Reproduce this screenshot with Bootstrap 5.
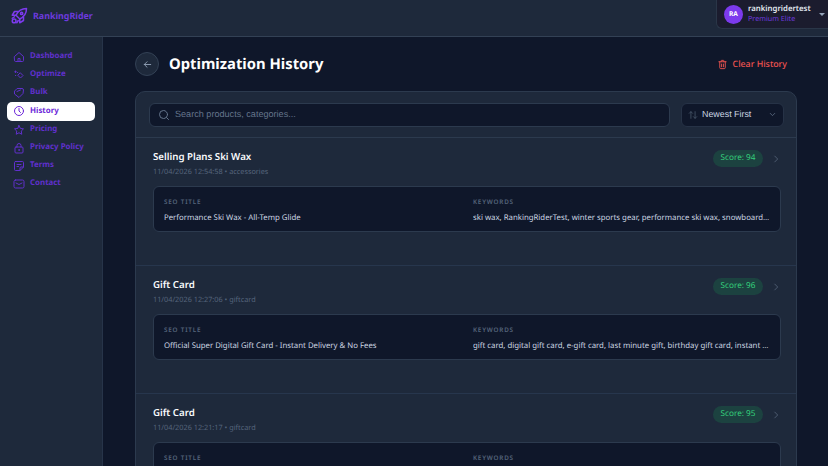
<!DOCTYPE html>
<html lang="en">
<head>
    <meta charset="UTF-8">
    <meta name="viewport" content="width=device-width, initial-scale=1.0">
    <title>Optimization History</title>
    <link href="https://cdn.jsdelivr.net/npm/bootstrap@5.3.0/dist/css/bootstrap.min.css" rel="stylesheet">
    <style>
        html, body { height: 100%; overflow: hidden; }
        body { background: #0f172a; font-family: "Noto Sans", sans-serif; color: #f1f5f9; text-rendering: geometricPrecision; }
        svg { display: block; flex-shrink: 0; fill: none; stroke: currentColor; stroke-width: 2; stroke-linecap: round; stroke-linejoin: round; }
        .topbar { height: 37px; background: #1e293b; border-bottom: 1px solid #334155; padding: 0 0 5px 10px; }
        .brand { color: #6d3ade; font-size: 8.9px; font-weight: 700; margin-left: 5px; }
        .user-box { width: 112px; height: 29px; background: #1b1c2e; border: 1px solid #2a3648; border-top: 0; border-right: 0; border-radius: 0 0 0 6px; padding-left: 7px; }
        .avatar { width: 19px; height: 19px; background: #7c3aed; font-size: 6.6px; font-weight: 700; color: #fff; }
        .user-info { margin-left: 5px; width: 66px; }
        .user-name { font-size: 7.8px; font-weight: 600; line-height: 10px; color: #e2e8f0; }
        .user-plan { font-size: 7.2px; line-height: 10px; color: #6d3ade; }
        .caret { width: 0; height: 0; border-left: 3px solid transparent; border-right: 3px solid transparent; border-top: 3px solid #94a3b8; margin-left: 5px; }
        .shell { height: 429px; }
        .sidebar { width: 103px; background: #1e293b; border-right: 1px solid #273449; padding: 11px 7px; flex-shrink: 0; }
        .side-link { height: 18.15px; padding-left: 6px; gap: 5px; color: #6030cc; font-size: 7.9px; font-weight: 700; text-decoration: none; border-radius: 5px; }
        .side-link.active { background: #fff; color: #6d28d9; }
        .main { padding: 15px 31px 0 32px; min-width: 0; }
        .back-btn { width: 24px; height: 24px; background: #1e293b; border: 1px solid #334155; color: #94a3b8; }
        .page-title { font-size: 14.8px; font-weight: 700; color: #fff; margin: 1px 0 0 10px; }
        .clear-btn { color: #ef5350; font-size: 8.8px; font-weight: 500; gap: 5px; margin: 1px 10px 0 0; }
        .history-card { margin-top: 15px; background: #1e293b; border: 1px solid #2c3a4e; border-radius: 10px 10px 0 0; }
        .filter-row { height: 46px; padding: 0 12px 0 13px; gap: 11px; border-bottom: 1px solid #2c3a4e; }
        .search-box { height: 24px; background: #0f172a; border: 1px solid #2c3a4e; border-radius: 6px; padding-left: 8px; gap: 5px; color: #64748b; font-family: "Liberation Sans", sans-serif; font-size: 9.1px; }
        .sort-box { width: 103px; height: 24px; background: #0f172a; border: 1px solid #263246; border-radius: 6px; padding: 0 6px; color: #cbd5e1; font-family: "Liberation Sans", sans-serif; font-size: 8.9px; }
        .sort-label { margin-left: 4px; }
        .item { height: 128px; padding: 12px 15px 0 17px; border-bottom: 1px solid #27364d; }
        .item-title { font-size: 9.7px; font-weight: 600; line-height: 14px; color: #f8fafc; }
        .item-meta { font-size: 7.3px; line-height: 10px; color: #56657b; margin-top: 3px; }
        .score { height: 17px; width: 50px; background: #1c4240; color: #34d07b; font-size: 8.2px; border-radius: 9px; }
        .chevron { color: #55647a; margin-left: 8px; }
        .seo-box { margin-top: 9px; height: 46px; background: #0f172a; border: 1px solid #2c3a4e; border-radius: 6px; padding: 10px 10px 0; display: grid; grid-template-columns: minmax(0, 1fr) minmax(0, 1fr); column-gap: 12px; }
        .seo-label { font-size: 6.3px; font-weight: 600; letter-spacing: .8px; color: #55647a; line-height: 10px; }
        .seo-text { font-size: 7.8px; line-height: 12px; margin-top: 5px; color: #cbd5e1; white-space: nowrap; overflow: hidden; text-overflow: ellipsis; }
    </style>
</head>
<body>
    <div class="topbar d-flex align-items-center justify-content-between">
        <div class="d-flex align-items-center">
            <svg width="18" height="18" viewBox="0 0 24 24" style="color:#7c3aed">
                <path d="M22 2c-7 0-11 3-14 9l5 5c6-3 9-7 9-14z"/>
                <path d="M8 11H3l3-5h5M13 16v5l5-3v-5"/>
                <circle cx="15.5" cy="8.5" r="1.5"/>
                <circle cx="5.5" cy="18.5" r="2.5"/>
                <path d="M3 15l3-2M9 21l2-3"/>
            </svg>
            <span class="brand">RankingRider</span>
        </div>
        <div class="user-box d-flex align-items-center align-self-start">
            <div class="avatar rounded-circle d-flex align-items-center justify-content-center">RA</div>
            <div class="user-info">
                <div class="user-name">rankingridertest</div>
                <div class="user-plan">Premium Elite</div>
            </div>
            <span class="caret"></span>
        </div>
    </div>

    <div class="shell d-flex">
        <nav class="sidebar d-flex flex-column">
            <a class="side-link d-flex align-items-center" href="#"><svg width="12" height="12" viewBox="0 0 24 24"><path d="M3 11l9-8 9 8v8a2 2 0 0 1-2 2H5a2 2 0 0 1-2-2z"/><path d="M10 21v-6h4v6"/></svg>Dashboard</a>
            <a class="side-link d-flex align-items-center" href="#"><svg width="12" height="12" viewBox="0 0 24 24"><path d="M15 8l5 5-5 5-5-5z"/><path d="M5 4v3M3.5 5.5h3M9 7h.5M5 13h.5"/></svg>Optimize</a>
            <a class="side-link d-flex align-items-center" href="#"><svg width="12" height="12" viewBox="0 0 24 24"><path d="M9 3h9a3 3 0 0 1 3 3l-1 7-8 8-9-7V9z"/><path d="M8 9l7-3"/></svg>Bulk</a>
            <a class="side-link active d-flex align-items-center" href="#"><svg width="12" height="12" viewBox="0 0 24 24"><circle cx="12" cy="12" r="9"/><path d="M12 7v5l3 3"/></svg>History</a>
            <a class="side-link d-flex align-items-center" href="#"><svg width="12" height="12" viewBox="0 0 24 24"><path d="M12 3l2.8 5.8 6.2.9-4.5 4.4 1 6.4-5.5-3-5.5 3 1-6.4L3 9.7l6.2-.9z"/></svg>Pricing</a>
            <a class="side-link d-flex align-items-center" href="#"><svg width="12" height="12" viewBox="0 0 24 24"><rect x="4" y="10" width="16" height="12" rx="2"/><path d="M8 10V7a4 4 0 0 1 8 0v3"/><circle cx="12" cy="16" r="1"/></svg>Privacy Policy</a>
            <a class="side-link d-flex align-items-center" href="#"><svg width="12" height="12" viewBox="0 0 24 24"><path d="M5 3h14a2 2 0 0 1 2 2v9l-7 7H5a2 2 0 0 1-2-2V5a2 2 0 0 1 2-2z"/><path d="M8 9h8M8 13h3M14 21v-5a2 2 0 0 1 2-2h5"/></svg>Terms</a>
            <a class="side-link d-flex align-items-center" href="#"><svg width="12" height="12" viewBox="0 0 24 24"><rect x="2" y="4" width="20" height="16" rx="3"/><path d="M6 10l6 3 6-3"/></svg>Contact</a>
        </nav>

        <main class="main flex-grow-1">
            <div class="d-flex align-items-center">
                <div class="back-btn rounded-circle d-flex align-items-center justify-content-center">
                    <svg width="11" height="11" viewBox="0 0 24 24"><path d="M19 12H5M11 6l-6 6 6 6"/></svg>
                </div>
                <h1 class="page-title">Optimization History</h1>
                <div class="clear-btn ms-auto d-flex align-items-center">
                    <svg width="11" height="11" viewBox="0 0 24 24"><path d="M4 6h16M9 6V4a1 1 0 0 1 1-1h4a1 1 0 0 1 1 1v2M6 6v13a2 2 0 0 0 2 2h8a2 2 0 0 0 2-2V6M10 11v6M14 11v6"/></svg>
                    Clear History
                </div>
            </div>

            <div class="history-card">
                <div class="filter-row d-flex align-items-center">
                    <div class="search-box flex-grow-1 d-flex align-items-center">
                        <svg width="12" height="12" viewBox="0 0 24 24"><circle cx="11" cy="11" r="8"/><path d="M21 21l-4-4"/></svg>
                        Search products, categories...
                    </div>
                    <div class="sort-box d-flex align-items-center">
                        <svg width="10" height="10" viewBox="0 0 24 24" style="color:#475569"><path d="M7 20V4M3 8l4-4 4 4M17 4v16M13 16l4 4 4-4"/></svg>
                        <span class="sort-label">Newest First</span>
                        <svg class="ms-auto" width="9" height="9" viewBox="0 0 24 24" style="color:#64748b"><path d="M6 9l6 6 6-6"/></svg>
                    </div>
                </div>

                <div class="item">
                    <div class="d-flex justify-content-between">
                        <div>
                            <div class="item-title">Selling Plans Ski Wax</div>
                            <div class="item-meta">11/04/2026 12:54:58 • accessories</div>
                        </div>
                        <div class="d-flex align-items-center align-self-start">
                            <span class="score d-flex align-items-center justify-content-center">Score: 94</span>
                            <svg class="chevron" width="10" height="10" viewBox="0 0 24 24"><path d="M9 5l7 7-7 7"/></svg>
                        </div>
                    </div>
                    <div class="seo-box">
                        <div>
                            <div class="seo-label">SEO TITLE</div>
                            <div class="seo-text">Performance Ski Wax - All-Temp Glide</div>
                        </div>
                        <div>
                            <div class="seo-label">KEYWORDS</div>
                            <div class="seo-text">ski wax, RankingRiderTest, winter sports gear, performance ski wax, snowboard wax, alpine</div>
                        </div>
                    </div>
                </div>

                <div class="item">
                    <div class="d-flex justify-content-between">
                        <div>
                            <div class="item-title">Gift Card</div>
                            <div class="item-meta">11/04/2026 12:27:06 • giftcard</div>
                        </div>
                        <div class="d-flex align-items-center align-self-start">
                            <span class="score d-flex align-items-center justify-content-center">Score: 96</span>
                            <svg class="chevron" width="10" height="10" viewBox="0 0 24 24"><path d="M9 5l7 7-7 7"/></svg>
                        </div>
                    </div>
                    <div class="seo-box">
                        <div>
                            <div class="seo-label">SEO TITLE</div>
                            <div class="seo-text">Official Super Digital Gift Card - Instant Delivery &amp; No Fees</div>
                        </div>
                        <div>
                            <div class="seo-label">KEYWORDS</div>
                            <div class="seo-text">gift card, digital gift card, e-gift card, last minute gift, birthday gift card, instant delivery gift</div>
                        </div>
                    </div>
                </div>

                <div class="item">
                    <div class="d-flex justify-content-between">
                        <div>
                            <div class="item-title">Gift Card</div>
                            <div class="item-meta">11/04/2026 12:21:17 • giftcard</div>
                        </div>
                        <div class="d-flex align-items-center align-self-start">
                            <span class="score d-flex align-items-center justify-content-center">Score: 95</span>
                            <svg class="chevron" width="10" height="10" viewBox="0 0 24 24"><path d="M9 5l7 7-7 7"/></svg>
                        </div>
                    </div>
                    <div class="seo-box">
                        <div>
                            <div class="seo-label">SEO TITLE</div>
                        </div>
                        <div>
                            <div class="seo-label">KEYWORDS</div>
                        </div>
                    </div>
                </div>
            </div>
        </main>
    </div>
    <script src="https://cdn.jsdelivr.net/npm/bootstrap@5.3.0/dist/js/bootstrap.bundle.min.js"></script>
</body>
</html>
